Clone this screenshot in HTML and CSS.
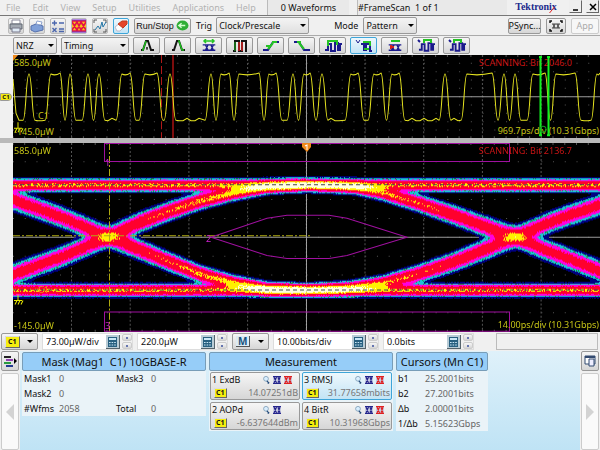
FILE: index.html
```html
<!DOCTYPE html>
<html lang="en">
<head>
    <meta charset="utf-8">
    <title>Sampling Oscilloscope</title>
    <link rel="stylesheet" href="styles.css">
</head>
<body>
    <!-- shared icons -->
    <svg class="defs" width="0" height="0">
        <symbol id="i-eye" viewBox="0 0 14 10">
            <path d="M0 2h3l3 6h3l3-6h2M0 8h3l3-6h3l3 6h2M0 2h14M0 8h14" fill="none" stroke="currentColor" stroke-width="1.5"/>
        </symbol>
        <symbol id="i-calc" viewBox="0 0 14 14">
            <rect width="14" height="14" fill="#b9ccd6"/>
            <path d="M0 14h14V0" fill="none" stroke="#55636b" stroke-width="2"/>
            <rect x="2" y="2" width="9" height="10" fill="#286080"/>
            <path d="M3 4h7" stroke="#c9e6f5" stroke-width="2"/>
            <path d="M3 7.5h7M3 10h7" stroke="#c9e6f5" stroke-dasharray="1.6 1"/>
        </symbol>
        <symbol id="i-lens" viewBox="0 0 10 10">
            <circle cx="5" cy="3.5" r="3" fill="#d9efff" stroke="#7a9ab5"/>
            <path d="M6 6l3 3M7 9h2" stroke="#234a7a" stroke-width="1.5"/>
        </symbol>
        <symbol id="i-mini" viewBox="0 0 8 8">
            <rect width="8" height="8" fill="#c9cbe2"/>
            <path d="M0 .5h8M0 7.500h8M1 1l2.500 6M3.500 1L1 7M5 1l2 6M7 1L5 7" fill="none" stroke="currentColor" stroke-width="1.2"/>
        </symbol>
        <symbol id="i-pulse" viewBox="0 0 18 13">
            <path d="M1 11h3V5h3v7h4V4h3v7h2V5h2" fill="none" stroke="#1a1a8c" stroke-width="2"/>
        </symbol>
    </svg>

    <header class="menubar">
        <nav class="menus">
            <button disabled>File</button>
            <button disabled>Edit</button>
            <button disabled>View</button>
            <button disabled>Setup</button>
            <button disabled>Utilities</button>
            <button disabled>Applications</button>
            <button disabled>Help</button>
        </nav>
        <div class="status count">0 Waveforms</div>
        <div class="status scan">#FrameScan&nbsp; 1 of 1</div>
        <div class="brand">Tektronix<svg viewBox="0 0 5 6"><path d="M0 6L5 0" stroke="#e02020"/></svg></div>
        <button class="win" aria-label="Minimize"><svg viewBox="0 0 10 10"><path d="M2 8h5" stroke="#000" stroke-width="1.5"/></svg></button>
        <button class="win" aria-label="Close"><svg viewBox="0 0 10 10"><path d="M2 2l6 6M8 2l-6 6" stroke="#000" stroke-width="1.5"/></svg></button>
    </header>

    <div class="toolbar main">
        <div class="tools">
            <button class="tool" aria-label="Print"><svg viewBox="0 0 14 14"><path d="M3 1h8v4H3z" fill="#fff" stroke="#889"/><path d="M1 5h12v5H1z" fill="#a3a9b2" stroke="#5f6670"/><path d="M3 9h8v4H3z" fill="#dfeaf5" stroke="#778"/></svg></button>
            <button class="tool" aria-label="Open"><svg viewBox="0 0 14 14"><path d="M1 7l5-2 7 2v4l-8 2-4-2z" fill="#7f9fd8" stroke="#5570ad"/><path d="M6 5l1-3 5 1-1 3z" fill="#fff" stroke="#8ea3cf"/></svg></button>
            <button class="tool" aria-label="Math"><svg viewBox="0 0 14 14"><path d="M1 4h5M3.500 1.500v5M8 4h5M1.500 9l4 4M5.500 9l-4 4M8 10h5M8 12.500h5" stroke="#4a66ad" stroke-width="1.4"/></svg></button>
            <button class="tool" aria-label="Mask test"><svg viewBox="0 0 14 14"><path d="M0 1h14v12H0z" fill="#f6c318"/><path d="M0 2h14M0 12h14M0 3l5 8 4-8 5 8M0 11l5-8 4 8 5-8" fill="none" stroke="#e3124b" stroke-width="1.6"/><path d="M0 1h14M0 13h14" stroke="#6b18c8"/></svg></button>
            <button class="tool" aria-label="Zoom waveform"><svg viewBox="0 0 14 14"><path d="M1 1h3M10 1h3M1 13h3M10 13h3M1 1v3M13 1v3M1 10v3M13 10v3" stroke="#555"/><path d="M2 11l3-4 2 3 2-7 1 5 3-5" fill="none" stroke="#2677a8"/></svg></button>
            <button class="tool on" aria-label="Clear data"><svg viewBox="0 0 14 14"><path d="M1 8l5-4 4 4-4 4H3z" fill="#fff" stroke="#bbc"/><path d="M4 5l4-3h5v3L9 9z" fill="#e5452a" stroke="#c23a1c"/></svg></button>
        </div>
        <button class="run">Run/Stop <svg viewBox="0 0 14 12"><ellipse cx="7" cy="6" rx="6.500" ry="5.500" fill="#2fae36"/><path d="M3 6h7M6 3.500L3 6l3 2.500" fill="none" stroke="#d5ffd0" stroke-width="1.5"/></svg></button>
        <label for="trig">Trig</label>
        <span class="pick trig"><select id="trig"><option>Clock/Prescale</option></select></span>
        <label for="mode" class="modelabel">Mode</label>
        <span class="pick mode"><select id="mode"><option>Pattern</option></select></span>
        <div class="right">
            <button class="psync">PSync...</button>
            <button class="fit" aria-label="Fit"><svg viewBox="0 0 14 12"><path d="M1 3V1h2M11 1h2v2M13 9v2h-2M3 11H1V9" fill="none" stroke="#111" stroke-width="1.5"/><path d="M3 4h8M3 8h8M4 4l2 4M6 4L4 8M8 4l2 4M10 4L8 8" stroke="#444"/></svg></button>
            <button class="app" disabled>App</button>
        </div>
    </div>

    <div class="toolbar sub">
        <span class="pick nrz"><select aria-label="Signal type"><option>NRZ</option></select></span>
        <span class="pick timing"><select aria-label="Category"><option>Timing</option></select></span>
        <div class="measures">
            <button aria-label="Pulse width"><svg viewBox="0 0 18 13"><path d="M3 11h2l3-9h2l3 9h3" fill="none" stroke="#151515" stroke-width="2"/><path d="M4 11h1l3-9" fill="none" stroke="#1cbb1c" stroke-width="1.5"/><path d="M8 9h2M9 8v3" stroke="#151515"/></svg></button>
            <button aria-label="Peak"><svg viewBox="0 0 18 13"><path d="M3 11h2l3-9h2l3 9h3" fill="none" stroke="#151515" stroke-width="2"/><path d="M9 2h1l3 9h2" fill="none" stroke="#1cbb1c" stroke-width="1.5"/></svg></button>
            <button aria-label="Bit time"><svg viewBox="0 0 18 13" color="#1a1a8c"><use href="#i-eye" x="1" y="4" width="16" height="9"/><path d="M5 2h8M6 0L4 2l2 2M12 0l2 2-2 2" fill="none" stroke="#25c425" stroke-width="1.5"/></svg></button>
            <button aria-label="Duty cycle"><svg viewBox="0 0 18 13"><path d="M2 12h2V2h4v10h3V2h4v10h1" fill="none" stroke="#151515" stroke-width="2"/><path d="M8 3v9M11 12V3" stroke="#d42020" stroke-width="1.5"/><path d="M4 12V3" stroke="#1cbb1c"/></svg></button>
            <button aria-label="Rise time"><svg viewBox="0 0 18 13"><path d="M1 11h5l5-8h6" fill="none" stroke="#1a1a8c" stroke-width="2"/><path d="M6 10l5-6M4 7h4M10 3h5" stroke="#25c425" stroke-width="2"/></svg></button>
            <button aria-label="Fall time"><svg viewBox="0 0 18 13"><path d="M1 3h5l5 8h6" fill="none" stroke="#1a1a8c" stroke-width="2"/><path d="M6 4l5 6M4 3h4" stroke="#25c425" stroke-width="2"/></svg></button>
            <button aria-label="Period"><svg viewBox="0 0 18 13"><use href="#i-pulse" width="18" height="13"/><path d="M4 7V2h9v4" fill="none" stroke="#25c425" stroke-width="2"/></svg></button>
            <button class="on" aria-label="RMS jitter"><svg viewBox="0 0 18 13"><path d="M6 5h3v6h2V5h4v7h2" fill="none" stroke="#1a1a8c" stroke-width="2"/><path d="M8 3h7v4M9 10h5" fill="none" stroke="#25c425" stroke-width="2"/><path d="M1 1l2 3 2-3" fill="none" stroke="#1a1a8c"/></svg></button>
            <button aria-label="Crossing"><svg viewBox="0 0 18 13" color="#1a1a8c"><use href="#i-eye" x="1" y="4" width="16" height="9"/><path d="M5 2h9" stroke="#25c425" stroke-width="2"/><path d="M5 8h3M5 6v4" stroke="#d42020" stroke-width="2"/></svg></button>
            <button aria-label="Positive width"><svg viewBox="0 0 18 13"><use href="#i-pulse" x="1" width="17" height="13"/><path d="M7 4V1h7v3" fill="none" stroke="#25c425" stroke-width="2"/><path d="M1 1l2 2" stroke="#1a1a8c" stroke-width="2"/></svg></button>
            <button aria-label="Negative width"><svg viewBox="0 0 18 13"><use href="#i-pulse" x="1" width="17" height="13"/><path d="M6 4V1h7v3" fill="none" stroke="#25c425" stroke-width="2"/><path d="M1 1l2 2" stroke="#1a1a8c" stroke-width="2"/></svg></button>
        </div>
    </div>

    <main class="scope">
        <section class="view overview">
            <div class="gutter"><span class="chan">C1</span></div>
            <div class="plot">
                <svg class="layer" viewBox="0 0 587 83" preserveAspectRatio="none">
                    <g class="grid" data-height="83"></g>
                    <path d="M148.500 0v83" stroke="#b01818" stroke-dasharray="8 3"/>
                    <path d="M160 0v83" stroke="#7d0d0d" stroke-width="2"/>
                    <path id="trace" class="trace"/>
                    <path d="M0 0h5L0 6z" fill="#f08a1c"/>
                    <path d="M5 67v6M1 73h8M2 77l2-4M5 77l2-4M8 77l2-4" stroke="#e8e800"/>
                </svg>
                <span class="tag top">585.0µW</span>
                <span class="tag bottom">-145.0µW</span>
                <span class="tag name">C1</span>
                <span class="tag scanning">SCANNING: Bit 2046.0</span>
                <span class="tag scale">969.7ps/div (10.31Gbps)</span>
                <svg class="layer" viewBox="0 0 587 83" preserveAspectRatio="none">
                    <path d="M526 2h3M526 80h3M534 2h3M534 80h3M527.500 2v78M535.500 2v78" fill="none" stroke="#10f020" stroke-width="2"/>
                    <circle cx="530" cy="74" r="3" fill="none" stroke="#10a020"/>
                </svg>
            </div>
        </section>

        <section class="view eye">
            <div class="gutter"></div>
            <div class="plot">
                <svg class="layer" viewBox="0 0 587 188" preserveAspectRatio="none">
                    <g class="grid" data-height="188"></g>
                </svg>
                <canvas id="eye" class="layer" width="587" height="188"></canvas>
                <svg class="layer" viewBox="0 0 587 188" preserveAspectRatio="none">
                    <path d="M293.500 0v188" stroke="#aaa" stroke-dasharray="1 2"/>
                    <path d="M0 41.500h587M0 146.500h587" stroke="#444" stroke-dasharray="4 3"/>
                    <path d="M0 92.500h299M96.500 0v188" fill="none" stroke="#b0aa10" stroke-dasharray="7 2 2 2"/>
                    <g fill="none" stroke="#a010a0">
                        <path d="M91.500 .5h405v18h-405zM91.500 168.500h405v19h-405z"/>
                        <path d="M198 94l56-19 20-3h42l18 3 60 19-60 18-18 3h-42l-20-3z"/>
                    </g>
                    <path d="M289 0h9v4l-4 5-5-5z" fill="#f08a1c"/>
                    <path d="M292 3l2-1v5" fill="none" stroke="#fff"/>
                    <path d="M5 151v6M1 157h8M2 161l2-4M5 161l2-4M8 161l2-4" stroke="#e8e800"/>
                </svg>
                <span class="tag top">585.0µW</span>
                <span class="tag bottom">-145.0µW</span>
                <span class="tag name">C1</span>
                <span class="tag mask m1">1</span>
                <span class="tag mask m2">2</span>
                <span class="tag mask m3">3</span>
                <span class="tag scanning">SCANNING: Bit 2136.7</span>
                <span class="tag scale">14.00ps/div (10.31Gbps)</span>
            </div>
        </section>
    </main>

    <div class="controls">
        <button class="source" aria-label="Channel C1"><b class="c1">C1</b><i class="caret"></i></button>
        <div class="field">
            <input type="text" aria-label="Vertical scale" value="73.00µW/div">
            <button class="calc" aria-label="Keypad"><svg><use href="#i-calc"/></svg></button>
            <span class="spin"><button aria-label="Up"></button><button aria-label="Down"></button></span>
        </div>
        <div class="field">
            <input type="text" aria-label="Vertical offset" value="220.0µW">
            <button class="calc" aria-label="Keypad"><svg><use href="#i-calc"/></svg></button>
            <span class="spin"><button aria-label="Up"></button><button aria-label="Down"></button></span>
        </div>
        <button class="source" aria-label="Timebase"><b class="tb">M</b><i class="caret"></i></button>
        <div class="field wide">
            <input type="text" aria-label="Horizontal scale" value="10.00bits/div">
            <button class="calc" aria-label="Keypad"><svg><use href="#i-calc"/></svg></button>
            <span class="spin"><button aria-label="Up"></button><button aria-label="Down"></button></span>
        </div>
        <div class="field">
            <input type="text" aria-label="Horizontal position" value="0.0bits">
            <button class="calc" aria-label="Keypad"><svg><use href="#i-calc"/></svg></button>
            <span class="spin"><button aria-label="Up"></button><button aria-label="Down"></button></span>
        </div>
        <div class="message"></div>
    </div>

    <footer class="readouts">
        <div class="side">
            <button class="sidebtn" aria-label="Waveforms"><svg viewBox="0 0 14 14"><path d="M1 3h7" stroke="#222" stroke-width="2"/><path d="M3 6h7" stroke="#9040b0" stroke-width="2"/><path d="M1 9h7" stroke="#2a9a40" stroke-width="2"/><path d="M3 12h7" stroke="#223a90" stroke-width="2"/><path d="M11 4l3 3-3 3z" fill="#000"/></svg></button>
            <button class="page" aria-label="Previous"><svg viewBox="0 0 8 16"><path d="M8 0v16L0 8z" fill="#d3d3d3"/></svg></button>
        </div>

        <section class="panel maskpanel">
            <h2>Mask (Mag1&nbsp; C1) 10GBASE-R</h2>
            <dl class="counts">
                <dt>Mask1</dt><dd>0</dd><dt>Mask3</dt><dd>0</dd>
                <dt>Mask2</dt><dd>0</dd><dt></dt><dd></dd>
                <dt>#Wfms</dt><dd>2058</dd><dt>Total</dt><dd>0</dd>
            </dl>
        </section>

        <section class="panel measurepanel">
            <h2>Measurement</h2>
            <div class="cards">
                <button class="card">
                    <span class="line">1 ExdB <span class="icons"><svg><use href="#i-lens"/></svg><svg class="blue"><use href="#i-mini"/></svg><svg class="red"><use href="#i-mini"/></svg></span></span>
                    <span class="line"><b class="c1">C1</b><span class="value">14.07251dB</span></span>
                </button>
                <button class="card on">
                    <span class="line">3 RMSJ <span class="icons"><svg><use href="#i-lens"/></svg><svg class="blue"><use href="#i-mini"/></svg><svg class="red"><use href="#i-mini"/></svg></span></span>
                    <span class="line"><b class="c1">C1</b><span class="value">31.77658mbits</span></span>
                </button>
                <button class="card">
                    <span class="line">2 AOPd <span class="icons"><svg><use href="#i-lens"/></svg><svg class="blue"><use href="#i-mini"/></svg><svg></svg></span></span>
                    <span class="line"><b class="c1">C1</b><span class="value">-6.637644dBm</span></span>
                </button>
                <button class="card">
                    <span class="line">4 BitR <span class="icons"><svg><use href="#i-lens"/></svg><svg class="blue"><use href="#i-mini"/></svg><svg class="red"><use href="#i-mini"/></svg></span></span>
                    <span class="line"><b class="c1">C1</b><span class="value">10.31968Gbps</span></span>
                </button>
            </div>
        </section>

        <section class="panel cursorpanel">
            <h2>Cursors (Mn C1)</h2>
            <dl class="cursors">
                <dt>b1</dt><dd>25.2001bits</dd>
                <dt>b2</dt><dd>27.2001bits</dd>
                <dt>Δb</dt><dd>2.00001bits</dd>
                <dt>1/Δb</dt><dd>5.15623Gbps</dd>
            </dl>
        </section>

        <div class="side last">
            <button class="sidebtn" aria-label="Windows"><svg viewBox="0 0 14 14"><path d="M2 2h10v8H2z" fill="#fff" stroke="#334a70"/><path d="M2 3h10" stroke="#334a70" stroke-width="2"/><path d="M6 5h5v7H6z" fill="#eef" stroke="#334a70"/></svg></button>
            <button class="page" aria-label="Next"><svg viewBox="0 0 8 16"><path d="M0 0v16l8-8z" fill="#d3d3d3"/></svg></button>
        </div>
    </footer>

    <script src="scope.js"></script>
</body>
</html>
```

FILE: styles.css
```css
* { box-sizing: border-box; }
body { margin: 0; height: 100vh; display: flex; flex-direction: column; background: #f0f0f0; color: #111; font: 9px/12px "Noto Sans", "Open Sans", sans-serif; overflow: hidden; }
button, input, select { font: inherit; color: inherit; margin: 0; padding: 0; }
button { display: flex; align-items: center; justify-content: center; border: 1px solid #999; border-radius: 2px; background: linear-gradient(#f6f6f6, #d6d6d6); white-space: nowrap; }
.defs { position: absolute; }

/* menu bar */
.menubar { display: flex; height: 16px; border-bottom: 1px solid #777; align-items: stretch; padding-right: 1px; }
.menus { display: flex; gap: 12px; padding-left: 6px; flex: 0 0 267px; }
.menus button { border: 0; background: none; color: #b2b2b2; }
.status { background: #e9e9e9; border-left: 1px solid #bbb; line-height: 16px; }
.count { flex: 0 0 82px; text-align: center; }
.scan { flex: 0 0 150px; margin-left: 8px; }
.brand { flex: 1; position: relative; text-align: center; font: bold 10px/13px "Liberation Serif", serif; color: #1c2a8c; }
.brand svg { position: absolute; right: 10px; bottom: 2px; width: 6px; height: 6px; }
.win { width: 13px; height: 13px; margin-left: 4px; border-color: #eee #666 #666 #eee; border-radius: 0; background: #efefef; }
.win svg { width: 10px; height: 10px; flex: none; }

/* toolbars */
.toolbar { display: flex; align-items: center; flex: none; }
.main { height: 20px; border-bottom: 1px solid #aaa; padding: 0 1px 0 8px; }
.tools { display: flex; gap: 5px; }
.tool { width: 16px; height: 16px; border-color: #bbb; }
.tool svg { width: 14px; height: 14px; flex: none; }
.on { border-color: #3ea5d8; background: linear-gradient(#eef8fd, #c3e4f5); }
.run { width: 57px; height: 16px; margin: 0 5px 0 5px; font-family: "Liberation Sans", Arial, sans-serif; gap: 2px; }
.run svg { width: 13px; height: 11px; flex: none; }
.pick { position: relative; display: block; }
.pick select { appearance: none; width: 100%; height: 17px; border: 1px solid #999; border-radius: 2px; background: linear-gradient(#f4f4f4, #e0e0e0); padding-left: 2px; }
.pick::after, .caret { content: ""; border: 3px solid transparent; border-top-color: #000; border-bottom: 0; }
.pick::after { position: absolute; right: 3px; top: 7px; pointer-events: none; }
.trig { width: 93px; margin-left: 4px; }
.modelabel { margin-left: 25px; }
.mode { width: 54px; margin-left: 5px; }
.right { display: flex; gap: 5px; margin-left: auto; }
.right button { height: 16px; }
.psync { width: 33px; }
.fit { width: 20px; }
.fit svg { width: 14px; height: 12px; }
.app { width: 28px; color: #aaa; background: #f7f7f7; border-color: #ccc; }
.sub { height: 19px; padding-left: 13px; gap: 4px; }
.nrz { width: 44px; }
.timing { width: 68px; }
.measures { display: flex; gap: 4px; }
.measures button { width: 27px; height: 17px; }
.measures svg { width: 18px; height: 13px; flex: none; }

/* waveform views */
.scope { flex: 1; min-height: 0; display: flex; flex-direction: column; gap: 5px; background: #b9b9b9; }
.view { display: flex; min-height: 0; }
.overview { flex: 83; }
.eye { flex: 188; }
.gutter { width: 13px; background: #f0f0f0; display: flex; align-items: center; }
.chan { width: 12px; background: #f2ea12; border-radius: 0 4px 4px 0; border: 1px solid #999; font-weight: bold; font-size: 6px; line-height: 6px; text-align: center; }
.plot { position: relative; flex: 1; background: #000; overflow: hidden; }
.layer { position: absolute; top: 0; left: 0; width: 100%; height: 100%; }
.grid { fill: none; stroke: #555; }
.grid .axis { stroke: #999; }
.trace { fill: none; stroke: #e8e620; stroke-width: 1; }
.tag { position: absolute; color: #c4c216; white-space: nowrap; }
.tag.top { left: 1px; top: 2px; }
.tag.bottom { left: 1px; bottom: 0; }
.tag.name { left: 25px; bottom: 16px; }
.eye .tag.name { bottom: 36px; color: #f08a1c; }
.tag.scanning { right: 28px; top: 2px; color: #c81414; }
.tag.scale { right: 1px; bottom: 1px; }
.tag.mask { color: #d020d0; }
.m1 { left: 92px; top: 14px; }
.m2 { left: 193px; top: 90px; }
.m3 { left: 92px; bottom: 0; }

/* scale controls */
.controls { display: flex; align-items: center; height: 19px; flex: none; padding: 0 2px 0 1px; gap: 4px; }
.source { flex: none; width: 37px; height: 17px; justify-content: space-between; padding: 0 4px 0 3px; }
.c1 { background: #f6ee10; border: 1px solid #999; border-color: #ddd #666 #666 #ddd; font-size: 7px; line-height: 8px; padding: 0 1px; }
.source .c1 { line-height: 10px; padding: 0 2px; }
.tb { color: #14507c; font-size: 10px; border-right: 1px solid #555; border-bottom: 1px solid #555; background: #dceaf2; line-height: 10px; padding: 0 2px; }
.field { display: flex; align-items: center; flex: 0 0 91px; min-width: 0; height: 17px; background: #fff; border: 1px solid #ddd; }
.wide { flex-basis: 106px; }
.field input { flex: 1; width: 0; min-width: 0; border: 0; padding-left: 3px; background: none; }
.calc { width: 14px; height: 14px; border: 0; }
.calc svg { width: 14px; height: 14px; flex: none; }
.spin { display: flex; flex-direction: column; gap: 1px; padding-left: 2px; background: #f0f0f0; }
.spin button { width: 10px; height: 7px; border-color: #ccc; }
.spin button::after { content: ""; border: 1px solid #6575b0; }
.message { flex: 0 1 102px; height: 17px; margin-left: auto; border: 1px solid #bbb; }

/* readout panels */
.readouts { display: flex; flex: 0 0 99px; gap: 2px; background: linear-gradient(#dff1fa, #bfe3f5); }
.side { display: flex; flex-direction: column; width: 20px; padding: 0 1px; gap: 2px; background: #f0f0f0; }
.side.last { margin-left: auto; }
.sidebtn { height: 20px; }
.sidebtn svg { width: 14px; height: 14px; flex: none; }
.page { flex: 1; background: #fafafa; border-color: #ccc; }
.page svg { width: 8px; height: 16px; }
.panel h2 { margin: 1px 0 0; border: 1px solid #789db8; border-radius: 2px; background: #96cdf8; font-size: 11px; font-weight: normal; line-height: 17px; text-align: center; white-space: nowrap; }
.maskpanel { width: 184px; }
.measurepanel { width: 184px; margin: 0 1px; }
.cursorpanel { width: 92px; }
dl { display: grid; margin: 0; padding-left: 2px; line-height: 15px; background: #eaf3f8; }
dd { margin: 0; color: #666; }
.counts { grid-template-columns: 35px 57px 35px 1fr; }
.cursors { grid-template-columns: 27px 1fr; }
.cards { display: grid; grid-template-columns: 1fr 1fr; gap: 2px; padding: 1px; background: #eaf3f8; }
.card { display: block; height: 28px; padding: 0 1px; text-align: left; }
.card .line { display: flex; align-items: center; justify-content: space-between; height: 13px; }
.card .c1 { margin-left: 2px; }
.card .value { color: #777; }
.icons { display: flex; gap: 3px; padding-right: 6px; }
.icons svg { width: 8px; height: 8px; }
.blue { color: #25258c; }
.red { color: #e02020; }
```

FILE: scope.js
```javascript
// Graticules
document.querySelectorAll('.grid').forEach(function(g) {
    var h = +g.dataset.height;
    var lines = '';
    for (var i = 1; i < 10; i++) {
        lines += 'M' + (i * 58.7 - 0.2).toFixed(1) + ' 0v' + h;
    }
    var ticks = '', dots = '';
    for (var t = 0; t < 50; t++) {
        var x = (t * 11.74).toFixed(1);
        ticks += 'M' + x + ' 0v2M' + x + ' ' + (h - 2) + 'v2';
    }
    for (var r = 1; r < 10; r++) {
        dots += 'M0 ' + (h * r / 10).toFixed(1) + 'h587';
    }
    g.innerHTML =
        '<path stroke-dasharray="2 2" d="' + lines + '"/>' +
        '<path stroke-dasharray="1 10.74" d="' + dots + '"/>' +
        '<path d="' + ticks + '"/>' +
        '<path class="axis" d="M0 ' + (h / 2) + 'h587M293.5 0v' + h + '"/>';
});

// Bit pattern: where the trace is high, from - to
var highs = [
    [16, 16], [38, 47], [57, 57], [75, 75], [86, 86], [109, 117], [132, 144], [157, 157],
    [198, 198], [208, 216], [226, 246], [256, 263], [280, 280], [291, 297], [309, 309],
    [338, 345], [361, 368], [379, 386], [432, 432], [454, 479], [491, 491], [502, 502],
    [520, 532], [543, 562], [584, 587]
];
var HI = 19, LO = 65;
var d = 'M0 24L3 58L6 ' + LO;
highs.forEach(function(run, i) {
    var a = run[0], b = run[1];
    var prev = i ? highs[i - 1][1] : 0;
    var next = i < highs.length - 1 ? highs[i + 1][0] : 600;
    var rise = Math.min(6, (a - prev) / 2);
    var fall = Math.min(6, (next - b) / 2);
    // ripple on a long low level
    if (a - prev > 18) {
        for (var x = prev + 9; x < a - 8; x += 4) {
            d += 'L' + x + ' ' + (LO + (x % 3 ? 0.5 : -2));
        }
    }
    d += 'L' + (a - rise) + ' ' + LO + 'C' + (a - rise / 2) + ' ' + LO + ' ' + (a - rise / 2) + ' ' + HI + ' ' + a + ' ' + HI;
    if (b > a) {
        d += 'Q' + (a + b) / 2 + ' ' + (HI + 2) + ' ' + b + ' ' + (HI - 1);
    }
    if (b < 587) {
        d += 'C' + (b + fall / 2) + ' ' + HI + ' ' + (b + fall / 2) + ' ' + LO + ' ' + (b + fall) + ' ' + LO;
    }
});
document.getElementById('trace').setAttribute('d', d);

// Eye diagram: hit density of the rails and the edges
var canvas = document.getElementById('eye');
var ctx = canvas.getContext('2d');
var W = canvas.width, H = canvas.height;
var img = ctx.createImageData(W, H);

var falling1 = [[0, 56], [50, 74], [95, 93], [125, 105], [154, 117], [187, 130], [220, 139], [255, 145], [293, 146]];
var rising1 = [[0, 130], [50, 112], [95, 93], [125, 79], [154, 68], [187, 57], [220, 49], [255, 43], [293, 41]];
var falling2 = [[293, 41], [340, 43], [370, 49], [404, 59], [440, 71], [470, 82], [502, 93], [530, 105], [554, 114], [587, 127]];
var rising2 = [[293, 146], [337, 144], [370, 139], [404, 130], [440, 118], [470, 106], [502, 93], [530, 81], [554, 72], [587, 61]];

function yAt(pts, x) {
    for (var i = 1; i < pts.length; i++) {
        if (x <= pts[i][0]) {
            var t = (x - pts[i - 1][0]) / (pts[i][0] - pts[i - 1][0]);
            return pts[i - 1][1] + t * (pts[i][1] - pts[i - 1][1]);
        }
    }
    return pts[pts.length - 1][1];
}

// repeatable noise
var seed = 7;
function rnd() {
    seed = (seed * 16807) % 2147483647;
    return seed / 2147483647;
}

function bell(dist, s) {
    return Math.exp(-dist * dist / (2 * s * s));
}

function colour(v) {
    if (v > 1.4) return [255, 255, 225];
    if (v > 0.9) return [255, 240, 0];
    if (v > 0.4) return [255, 0, 45];
    if (v > 0.19) return [255, 0, 225];
    if (v > 0.075) return rnd() > 0.2 ? [30, 195, 215] : [20, 150, 60];
    if (v > 0.025) return [0, 0, 130];
    return null;
}

for (var x = 0; x < W; x++) {
    var fall = x < 293 ? yAt(falling1, x) : yAt(falling2, x);
    var rise = x < 293 ? yAt(rising1, x) : yAt(rising2, x);
    var near = Math.max(0, 1 - Math.abs(x - 293) / 190);
    var s = 5 - 2.2 * near;
    // edges are denser once they have crossed towards the middle
    var amp = 0.62 + (x < 293 ? 0.7 : 0.5) * Math.sqrt(near) * (0.5 + 0.5 * near);
    for (var y = 0; y < H; y++) {
        var v = amp * bell(y - fall, s) + amp * bell(y - rise, s);
        v += 0.95 * bell(y - 41.5, 3) + 0.95 * bell(y - 146, 3);
        v *= 0.84 + rnd() * 0.32;
        var c = colour(v);
        if (c) {
            var p = (y * W + x) * 4;
            img.data[p] = c[0];
            img.data[p + 1] = c[1];
            img.data[p + 2] = c[2];
            img.data[p + 3] = 255;
        }
    }
}
ctx.putImageData(img, 0, 0);
```
